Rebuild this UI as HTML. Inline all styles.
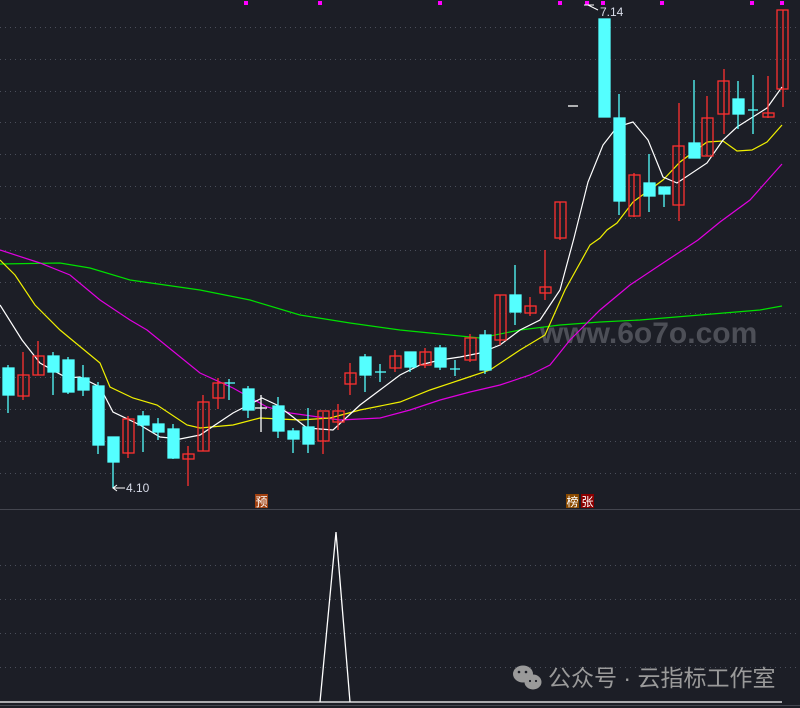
<!DOCTYPE html>
<html><head><meta charset="utf-8"><style>
html,body{margin:0;padding:0;background:#1c1e26;width:800px;height:708px;overflow:hidden}
svg{display:block}
.t{font-family:"Liberation Sans","Noto Sans CJK SC",sans-serif}
</style></head><body>
<svg width="800" height="708" viewBox="0 0 800 708" xmlns="http://www.w3.org/2000/svg">
<rect width="800" height="708" fill="#1c1e26"/>
<g stroke="#4a4e5a" stroke-width="1" stroke-dasharray="1,4">
<line x1="0" y1="27.5" x2="800" y2="27.5"/><line x1="0" y1="59.5" x2="800" y2="59.5"/><line x1="0" y1="91.5" x2="800" y2="91.5"/><line x1="0" y1="122.5" x2="800" y2="122.5"/><line x1="0" y1="154.5" x2="800" y2="154.5"/><line x1="0" y1="186.5" x2="800" y2="186.5"/><line x1="0" y1="218.5" x2="800" y2="218.5"/><line x1="0" y1="250.5" x2="800" y2="250.5"/><line x1="0" y1="282.5" x2="800" y2="282.5"/><line x1="0" y1="313.5" x2="800" y2="313.5"/><line x1="0" y1="345.5" x2="800" y2="345.5"/><line x1="0" y1="377.5" x2="800" y2="377.5"/><line x1="0" y1="409.5" x2="800" y2="409.5"/><line x1="0" y1="441.5" x2="800" y2="441.5"/><line x1="0" y1="473.5" x2="800" y2="473.5"/>
<line x1="0" y1="565.5" x2="800" y2="565.5"/><line x1="0" y1="599.5" x2="800" y2="599.5"/><line x1="0" y1="633.5" x2="800" y2="633.5"/><line x1="0" y1="667.5" x2="800" y2="667.5"/>
</g>
<line x1="0" y1="509.5" x2="800" y2="509.5" stroke="#44464f"/>
<line x1="0" y1="705.5" x2="800" y2="705.5" stroke="#44464f"/>
<text x="540" y="343" font-size="30" fill="#8a8c94" fill-opacity="0.45" class="t" font-weight="bold">www.6o7o.com</text>
<g fill="#ff00ff"><rect x="244" y="1" width="4" height="4"/><rect x="318" y="1" width="4" height="4"/><rect x="438" y="1" width="4" height="4"/><rect x="558" y="1" width="4" height="4"/><rect x="585" y="1" width="4" height="4"/><rect x="601" y="1" width="4" height="4"/><rect x="660" y="1" width="4" height="4"/><rect x="750" y="1" width="4" height="4"/><rect x="780" y="1" width="4" height="4"/></g>
<g fill="none" stroke-width="1.2">
<polyline stroke="#00e000" points="0,264 60,263 90,268 130,280 200,290 250,300 300,315 350,323 400,330 450,335 480,338 520,330 560,325 600,322 640,320 700,315 760,310 782,306"/>
<polyline stroke="#e000e0" points="0,250 40,263 70,275 100,300 130,320 147,330 200,373 233,388 267,407 290,413 340,420 380,418 410,410 440,400 470,392 500,385 530,375 550,365 570,340 600,310 630,285 660,265 698,240 720,222 750,200 782,164"/>
<polyline stroke="#f0f000" points="0,260 15,275 35,305 60,330 100,363 110,387 133,398 157,405 187,425 200,428 233,425 260,418 300,420 330,418 360,410 400,402 430,390 460,380 490,370 520,350 545,335 565,290 590,245 600,238 607,230 617,223 633,202 663,180 680,162 707,142 723,141 737,151 752,150 767,142 782,125"/>
<polyline stroke="#ffffff" points="0,305 22,340 40,363 67,378 80,377 100,387 113,412 140,425 160,437 180,439 200,435 233,413 262,398 277,405 293,417 307,428 333,430 360,405 380,390 400,375 420,365 440,360 460,357 480,353 500,345 520,330 540,320 560,290 574,238 588,182 603,145 617,127 633,122 648,140 663,177 677,183 707,163 723,140 737,127 767,108 782,87"/>
</g>
<g stroke-width="1.3">
<g stroke="#54ffff" fill="#54ffff">
<line x1="8" y1="365" x2="8" y2="413"/><rect x="3" y="368" width="11" height="27"/>
<line x1="53" y1="352" x2="53" y2="395"/><rect x="48" y="356" width="11" height="16"/>
<line x1="68" y1="357" x2="68" y2="394"/><rect x="63" y="360" width="11" height="32"/>
<line x1="83" y1="365" x2="83" y2="396"/><rect x="78" y="378" width="11" height="12"/>
<line x1="98" y1="382" x2="98" y2="454"/><rect x="93" y="386" width="11" height="59"/>
<line x1="113" y1="437" x2="113" y2="488"/><rect x="108" y="437" width="11" height="25"/>
<line x1="143" y1="411" x2="143" y2="452"/><rect x="138" y="416" width="11" height="9"/>
<line x1="158" y1="418" x2="158" y2="440"/><rect x="153" y="424" width="11" height="8"/>
<line x1="173" y1="424" x2="173" y2="459"/><rect x="168" y="429" width="11" height="29"/>
<line x1="248" y1="386" x2="248" y2="418"/><rect x="243" y="389" width="11" height="21"/>
<line x1="278" y1="397" x2="278" y2="438"/><rect x="273" y="406" width="11" height="25"/>
<line x1="293" y1="428" x2="293" y2="453"/><rect x="288" y="431" width="11" height="8"/>
<line x1="308" y1="408" x2="308" y2="453"/><rect x="303" y="427" width="11" height="17"/>
<line x1="365" y1="354" x2="365" y2="392"/><rect x="360" y="357" width="11" height="18"/>
<line x1="410" y1="352" x2="410" y2="372"/><rect x="405" y="352" width="11" height="15"/>
<line x1="440" y1="345" x2="440" y2="370"/><rect x="435" y="348" width="11" height="19"/>
<line x1="485" y1="330" x2="485" y2="374"/><rect x="480" y="335" width="11" height="35"/>
<line x1="515" y1="265" x2="515" y2="325"/><rect x="510" y="295" width="11" height="17"/>
<line x1="604" y1="19" x2="604" y2="117"/><rect x="599" y="19" width="11" height="98"/>
<line x1="619" y1="94" x2="619" y2="215"/><rect x="614" y="118" width="11" height="83"/>
<line x1="649" y1="154" x2="649" y2="212"/><rect x="644" y="183" width="11" height="13"/>
<line x1="664" y1="187" x2="664" y2="207"/><rect x="659" y="187" width="11" height="7"/>
<line x1="694" y1="80" x2="694" y2="158"/><rect x="689" y="143" width="11" height="15"/>
<line x1="738" y1="81" x2="738" y2="129"/><rect x="733" y="99" width="11" height="15"/>
</g>
<g stroke="#54ffff"><line x1="229" y1="379" x2="229" y2="400"/><line x1="224" y1="383" x2="235" y2="383"/><line x1="753" y1="75" x2="753" y2="134"/><line x1="748" y1="110" x2="758" y2="110"/><line x1="455" y1="360" x2="455" y2="376"/><line x1="450" y1="369" x2="460" y2="369"/><line x1="380" y1="364" x2="380" y2="382"/><line x1="375" y1="372" x2="386" y2="372"/></g>
<g stroke="#ffffff"><line x1="261" y1="395" x2="261" y2="432"/><line x1="255" y1="408" x2="267" y2="408"/><line x1="568" y1="106" x2="578" y2="106"/></g>
<g stroke="#ff3030" fill="none">
<line x1="23" y1="352" x2="23" y2="400"/><rect x="18" y="375" width="11" height="21"/>
<line x1="38" y1="341" x2="38" y2="375"/><rect x="33" y="356" width="11" height="19"/>
<line x1="128" y1="416" x2="128" y2="458"/><rect x="123" y="419" width="11" height="34"/>
<line x1="188" y1="446" x2="188" y2="486"/><rect x="183" y="454" width="11" height="5"/>
<line x1="203" y1="395" x2="203" y2="451"/><rect x="198" y="402" width="11" height="49"/>
<line x1="218" y1="378" x2="218" y2="409"/><rect x="213" y="383" width="11" height="15"/>
<line x1="323" y1="412" x2="323" y2="454"/><rect x="318" y="411" width="11" height="30"/>
<line x1="338" y1="404" x2="338" y2="430"/><rect x="333" y="411" width="11" height="11"/>
<line x1="350" y1="363" x2="350" y2="395"/><rect x="345" y="373" width="11" height="11"/>
<line x1="395" y1="350" x2="395" y2="372"/><rect x="390" y="356" width="11" height="12"/>
<line x1="425" y1="348" x2="425" y2="368"/><rect x="420" y="352" width="11" height="13"/>
<line x1="470" y1="334" x2="470" y2="362"/><rect x="465" y="338" width="11" height="22"/>
<line x1="500" y1="295" x2="500" y2="345"/><rect x="495" y="295" width="11" height="45"/>
<line x1="530" y1="297" x2="530" y2="316"/><rect x="525" y="306" width="11" height="7"/>
<line x1="545" y1="250" x2="545" y2="300"/><rect x="540" y="287" width="11" height="6"/>
<line x1="560" y1="202" x2="560" y2="240"/><rect x="555" y="202" width="11" height="36"/>
<line x1="634" y1="173" x2="634" y2="217"/><rect x="629" y="175" width="11" height="41"/>
<line x1="679" y1="103" x2="679" y2="221"/><rect x="673" y="146" width="11" height="59"/>
<line x1="707" y1="96" x2="707" y2="156"/><rect x="702" y="118" width="11" height="38"/>
<line x1="724" y1="69" x2="724" y2="134"/><rect x="718" y="81" width="11" height="33"/>
<line x1="768" y1="76" x2="768" y2="118"/><rect x="763" y="113" width="11" height="4"/>
<line x1="783" y1="10" x2="783" y2="107"/><rect x="777" y="10" width="11" height="79"/>
</g>
</g>
<g stroke="#ffffff" stroke-width="1" fill="none"><polyline points="113,488 125,488"/><polyline points="117,485 113,488 117,491"/><polyline points="588,5 598,10"/><polyline points="584,5 594,5"/></g>
<text x="126" y="492" font-size="12" fill="#d8dce8" class="t">4.10</text>
<text x="600" y="16" font-size="12" fill="#d8dce8" class="t">7.14</text>
<rect x="255" y="494" width="13" height="14" fill="#a04010"/>
<text x="255.5" y="506" font-size="12" fill="#fff" class="t">预</text>
<rect x="566" y="494" width="13" height="14" fill="#8a4a00"/>
<text x="566.5" y="506" font-size="12" fill="#fff" class="t">榜</text>
<rect x="581" y="494" width="13" height="14" fill="#8a0000"/>
<text x="581.5" y="506" font-size="12" fill="#fff" class="t">张</text>
<polyline points="320,702 336,532 350,702" fill="none" stroke="#ffffff" stroke-width="1.3"/>
<line x1="0" y1="702" x2="782" y2="702" stroke="#ffffff" stroke-width="1.3"/>
<g fill="#9a9a9a">
<ellipse cx="523" cy="674" rx="10" ry="8.5"/><ellipse cx="533" cy="682" rx="8.5" ry="7.5"/>
</g>
<g fill="#1c1e26"><circle cx="519" cy="672" r="1.3"/><circle cx="526" cy="672" r="1.3"/><circle cx="530" cy="681" r="1.1"/><circle cx="536" cy="681" r="1.1"/></g>
<text x="548" y="686" font-size="23" fill="#9a9a9a" class="t">公众号 · 云指标工作室</text>
</svg>
</body></html>
